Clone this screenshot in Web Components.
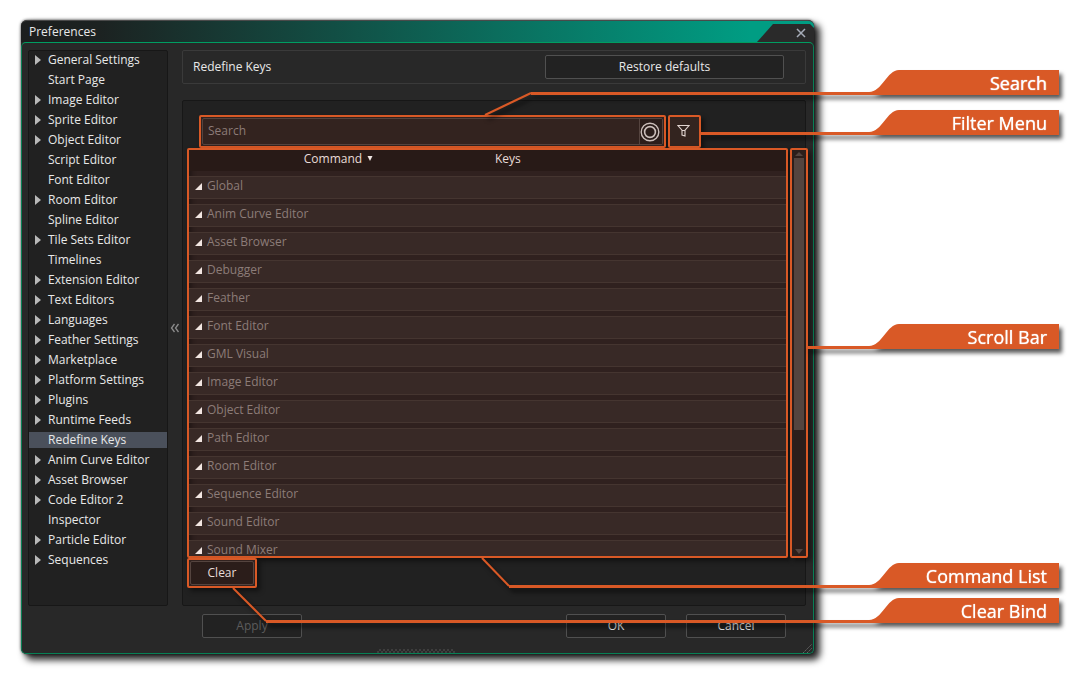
<!DOCTYPE html>
<html lang="en">
<head>
<meta charset="utf-8">
<title>Preferences - Redefine Keys</title>
<style>
  html, body { margin: 0; background: #fff; }
  body { font: 12px/20px "Open Sans", "Noto Sans", sans-serif; color: #e8e8e8; }
</style>
</head>
<body>
<preferences-figure></preferences-figure>

<script>
const define = (name, html, setup) => {
  const template = document.createElement('template');
  template.innerHTML = html;
  customElements.define(name, class extends HTMLElement {
    connectedCallback() {
      if (this.shadowRoot) return;
      this.attachShadow({ mode: 'open' }).append(template.content.cloneNode(true));
      if (setup) setup(this, this.shadowRoot);
    }
  });
};

/* Plain dialog button */
define('dialog-button', `
<style>
  :host { display: block; }
  button { display: block; box-sizing: border-box; width: 100%; height: 24px; padding: 0; font: inherit; line-height: 20px;
    color: var(--button-color, #e8e8e8); background: var(--button-fill, #222); border: 1px solid var(--button-edge, #505050); border-radius: 2px; }
  button:disabled { color: #5c5c5c; }
</style>
<button type="button"><slot></slot></button>`,
(el, root) => { root.querySelector('button').disabled = el.hasAttribute('disabled'); });

/* Orange outlined region */
define('marked-region', `
<style>
  :host { display: flex; box-sizing: border-box; border: 2px solid #d95926; border-radius: 2px; background: #322320;
    box-shadow: 3px 3px 5px rgba(0,0,0,.5); min-width: 0; min-height: 0; }
  ::slotted(*) { flex: 1; min-width: 0; }
</style>
<slot></slot>`);

/* Sidebar entry */
define('nav-item', `
<style>
  :host { display: block; padding: 2px 0; }
  a { display: flex; align-items: center; height: 16px; padding-left: 6px; color: inherit; text-decoration: none; line-height: 16px; }
  svg { width: 6px; height: 10px; margin-right: 7px; visibility: hidden; }
  :host([branch]) svg { visibility: visible; }
  :host([current]) a { background: #4a505b; }
</style>
<a href="#"><svg viewBox="0 0 6 10" aria-hidden="true"><path d="M0 0L6 5L0 10Z" fill="#b9b9b9"/></svg><slot></slot></a>`);

define('nav-tree', `
<style>
  :host { display: block; box-sizing: border-box; background: #212121; border: 1px solid #171717; border-radius: 2px; }
  nav { margin-top: -1px; }
</style>
<nav aria-label="Preference pages"></nav>`,
(el, root) => {
  const pages = ['+General Settings', 'Start Page', '+Image Editor', '+Sprite Editor', '+Object Editor', 'Script Editor',
    'Font Editor', '+Room Editor', 'Spline Editor', '+Tile Sets Editor', 'Timelines', '+Extension Editor', '+Text Editors',
    '+Languages', '+Feather Settings', '+Marketplace', '+Platform Settings', '+Plugins', '+Runtime Feeds', 'Redefine Keys',
    '+Anim Curve Editor', '+Asset Browser', '+Code Editor 2', 'Inspector', '+Particle Editor', '+Sequences'];
  for (const page of pages) {
    const item = document.createElement('nav-item');
    item.textContent = page.replace('+', '');
    item.toggleAttribute('branch', page[0] === '+');
    item.toggleAttribute('current', page === 'Redefine Keys');
    root.querySelector('nav').append(item);
  }
});

define('search-field', `
<style>
  :host { display: flex; box-sizing: border-box; height: 27px; margin: 1px; border: 1px solid #55443f; border-radius: 2px; background: #33231f; }
  input { flex: 1; min-width: 0; padding: 0 5px 2px; border: 0; background: none; font: inherit; color: #e8dcd8; outline: none; }
  input::placeholder { color: #8c7b77; opacity: 1; }
  button { width: 23px; padding: 0; border: 0; border-left: 1px solid #55443f; background: #2b1d1a; display: grid; place-items: center start; }
</style>
<input type="text" placeholder="Search" aria-label="Search">
<button type="button" aria-label="Search options"><svg width="20" height="20" viewBox="0 0 20 20" fill="none" stroke="#ccbfbb"><circle cx="10" cy="10" r="8.8" stroke-width="1.4"/><circle cx="10" cy="10" r="5.4" stroke-width="1.6"/></svg></button>`);

define('filter-button', `
<style>
  :host { display: flex; }
  button { width: 29px; height: 29px; border: 0; padding: 0 2px 2px 0; background: #33241f; display: grid; place-items: center; }
</style>
<button type="button" aria-label="Filter"><svg width="13" height="13" viewBox="0 0 13 13" fill="none" stroke="#e2d5d1" stroke-width="1.1"><path d="M1 1.5H12L8 6.2V12L5 11V6.2ZM5 6.5H8"/></svg></button>`);

define('command-list', `
<style>
  :host { display: block; overflow: hidden; background: #30211f; box-shadow: inset 3px 3px 5px rgba(0,0,0,.3); }
  table { width: 100%; margin-top: -5px; border-spacing: 0 5px; table-layout: fixed; }
  th { height: 21px; padding: 0; background: #281a17; font-weight: 400; line-height: 17px; vertical-align: top; color: #e8dcd8; }
  th:first-child { width: 299px; }
  th:last-child { text-align: left; padding-left: 7px; }
  th svg { margin-left: 5px; vertical-align: 2px; }
  td { height: 18px; padding: 0 0 3px 6px; border: solid #453530; border-width: 1px 0; background: #382926; color: #8c7c78; line-height: 18px; }
  td svg { margin-right: 5px; vertical-align: 0; }
</style>
<table>
  <thead><tr><th scope="col">Command<svg width="6" height="5" viewBox="0 0 6 5" aria-hidden="true"><path d="M0.5 0H5.5L3 5Z" fill="#f0e6e3"/></svg></th><th scope="col">Keys</th></tr></thead>
  <tbody></tbody>
</table>`,
(el, root) => {
  const groups = ['Global', 'Anim Curve Editor', 'Asset Browser', 'Debugger', 'Feather', 'Font Editor', 'GML Visual',
    'Image Editor', 'Object Editor', 'Path Editor', 'Room Editor', 'Sequence Editor', 'Sound Editor', 'Sound Mixer'];
  root.querySelector('tbody').innerHTML = groups.map(g =>
    `<tr><td colspan="2"><svg width="7" height="7" viewBox="0 0 7 7" aria-hidden="true"><path d="M7 0V7H0Z" fill="#f2e6e2"/></svg>${g}</td></tr>`).join('');
});

define('scroll-rail', `
<style>
  :host { display: flex; flex-direction: column; align-items: center; background: #2b1e1b; }
  .track { flex: 1; width: 10px; margin: 1px 0; }
  .thumb { height: 70%; background: #53443f; }
</style>
<svg width="8" height="7" viewBox="0 0 8 7" aria-hidden="true"><path d="M0 6L4 2L8 6Z" fill="#53443f"/></svg>
<div class="track"><div class="thumb"></div></div>
<svg width="8" height="8" viewBox="0 0 8 8" aria-hidden="true"><path d="M0 1H8L4 6Z" fill="#53443f"/></svg>`);

/* Leader line ending in a labelled tab */
define('call-out', `
<style>
  :host { position: absolute; display: flex; align-items: flex-end; height: 25px; right: 21px;
    filter: drop-shadow(3px 4px 2px rgba(0,0,0,.65)); pointer-events: none; }
  .line { flex: 1; height: 3px; background: #d95926; }
  .tip { position: absolute; overflow: visible; width: 1px; height: 1px; left: 0; bottom: 1px; }
  .curve { display: block; width: 30px; height: 25px; margin-left: -1px; }
  .label { box-sizing: border-box; width: 160px; height: 25px; padding-right: 12px; background: #d95926; color: #fff;
    font: 500 18px/26px "Open Sans", "Noto Sans", sans-serif; text-shadow: 0 0 1px #fff; text-align: right; white-space: nowrap; }
</style>
<svg class="tip" aria-hidden="true"><path fill="none" stroke="#d95926" stroke-width="2"/></svg>
<div class="line"></div>
<svg class="curve" viewBox="0 0 30 25" aria-hidden="true"><path d="M0 22C13 22 18 0 30 0V25H0Z" fill="#d95926"/></svg>
<div class="label"><slot></slot></div>`,
(el, root) => {
  const tip = el.getAttribute('tip');
  if (tip) root.querySelector('path').setAttribute('d', `M0 0L${tip}`);
});

define('title-bar', `
<style>
  :host { display: flex; box-sizing: border-box; height: 22px; border-top: 1px solid #4a4a4a; border-radius: 6px 6px 0 0; overflow: hidden;
    background: linear-gradient(90deg, #1c1e1e 0, #1c2221 10%, #009d83 92%); }
  h1 { flex: 1; margin: 0 0 0 8px; font: inherit; line-height: 22px; }
  button { width: 57px; height: 18px; margin: 3px 0 0; padding: 0; border: 0; background: #2a2a2a; clip-path: polygon(16px 0, 53px 0, 57px 4px, 57px 18px, 0 18px); display: flex; align-items: center; justify-content: flex-end; }
  svg { margin-right: 8px; }
</style>
<h1>Preferences</h1>
<button type="button" aria-label="Close"><svg width="10" height="10" viewBox="0 0 10 10" stroke="#a6acb8" stroke-width="1.5"><path d="M1 1L9 9M9 1L1 9"/></svg></button>`);

define('preferences-window', `
<style>
  :host { display: flex; flex-direction: column; border-radius: 6px; box-shadow: 0 0 3px rgba(0,0,0,.75), 5px 5px 7px 1px rgba(0,0,0,.85); background: #282828; }
  .body { flex: 1; min-height: 0; display: flex; flex-direction: column; border: 1px solid #087f55; border-top-color: #009d61; border-radius: 5px; padding: 7px 7px 0 6px; background: #282828; }
  .columns { flex: 1; min-height: 0; display: flex; }
  nav-tree { width: 140px; }
  .fold { width: 14px; padding: 0; border: 0; background: none; display: grid; place-items: center; }
  main { flex: 1; min-width: 0; display: flex; flex-direction: column; gap: 16px; }
  header { display: flex; align-items: center; justify-content: space-between; box-sizing: border-box; height: 34px; padding: 0 21px 0 10px; border: 1px solid #3a3a3a; border-radius: 2px; }
  h2 { margin: 0; font: inherit; }
  header dialog-button { width: 239px; }
  .panel { flex: 1; min-height: 0; display: flex; flex-direction: column; align-items: stretch; border: 1px solid #171717; border-radius: 2px; background: #212121; padding: 14px 0 17px; }
  .search { display: flex; gap: 2px; margin: 0 104px 0 16px; }
  .search marked-region:first-child { flex: 1; }
  .list { flex: 1; min-height: 0; display: flex; gap: 2px; margin: 0 -3px 0 4px; }
  .list marked-region:first-child { flex: 1; }
  .rail { width: 18px; }
  .clear { width: 70px; margin-left: 4px; }
  .clear dialog-button { margin: 1px; --button-fill: #2b1d1a; --button-edge: #55443f; --button-color: #e8dcd8; }
  footer { display: flex; gap: 20px; margin: 8px 20px 0 174px; }
  footer dialog-button { width: 100px; }
  footer dialog-button:first-child { margin-right: auto; }
  .grips { height: 15px; display: flex; align-items: flex-end; }
  .grips .dots { margin: 0 auto; }
  .grips .corner { margin-right: -6px; }
</style>
<title-bar></title-bar>
<div class="body">
  <div class="columns">
    <nav-tree></nav-tree>
    <button class="fold" type="button" aria-label="Collapse"><svg width="10" height="10" viewBox="0 0 10 10" fill="none" stroke="#8c8c8c" stroke-width="1.3"><path d="M4.500 1L1.500 5L4.500 9M8.500 1L5.500 5L8.500 9"/></svg></button>
    <main>
      <header><h2>Redefine Keys</h2><dialog-button>Restore defaults</dialog-button></header>
      <div class="panel">
        <div class="search">
          <marked-region><search-field></search-field></marked-region>
          <marked-region><filter-button></filter-button></marked-region>
        </div>
        <div class="list">
          <marked-region><command-list></command-list></marked-region>
          <marked-region class="rail"><scroll-rail></scroll-rail></marked-region>
        </div>
        <marked-region class="clear"><dialog-button>Clear</dialog-button></marked-region>
      </div>
    </main>
  </div>
  <footer><dialog-button disabled>Apply</dialog-button><dialog-button>OK</dialog-button><dialog-button>Cancel</dialog-button></footer>
  <div class="grips">
    <svg class="dots" width="78" height="4" aria-hidden="true"><path d="M2 1H78" stroke="#555" stroke-dasharray="2 2"/><path d="M0 3H78" stroke="#555" stroke-dasharray="2 2"/></svg>
    <svg class="corner" width="9" height="9" viewBox="0 0 9 9" stroke="#666" stroke-dasharray="2 1" aria-hidden="true"><path d="M0 9L9 0M4 9L9 4"/></svg>
  </div>
</div>`);

define('preferences-figure', `
<style>
  :host { display: flex; position: relative; box-sizing: border-box; height: 100vh; min-height: 560px; padding: 20px 266px 20px 21px; }
  preferences-window { flex: 1; min-width: 0; }
  .search { top: 70px; left: 531px; }
  .filter { top: 110px; width: 358px; }
  .scroll { top: 324px; width: 252px; }
  .commands { bottom: 86px; left: 509px; }
  .bind { bottom: 51px; left: 266px; }
</style>
<preferences-window></preferences-window>
<call-out class="search" tip="-46 22">Search</call-out>
<call-out class="filter">Filter Menu</call-out>
<call-out class="scroll">Scroll Bar</call-out>
<call-out class="commands" tip="-27 -28">Command List</call-out>
<call-out class="bind" tip="-33 -33">Clear Bind</call-out>`);
</script>
</body>
</html>
